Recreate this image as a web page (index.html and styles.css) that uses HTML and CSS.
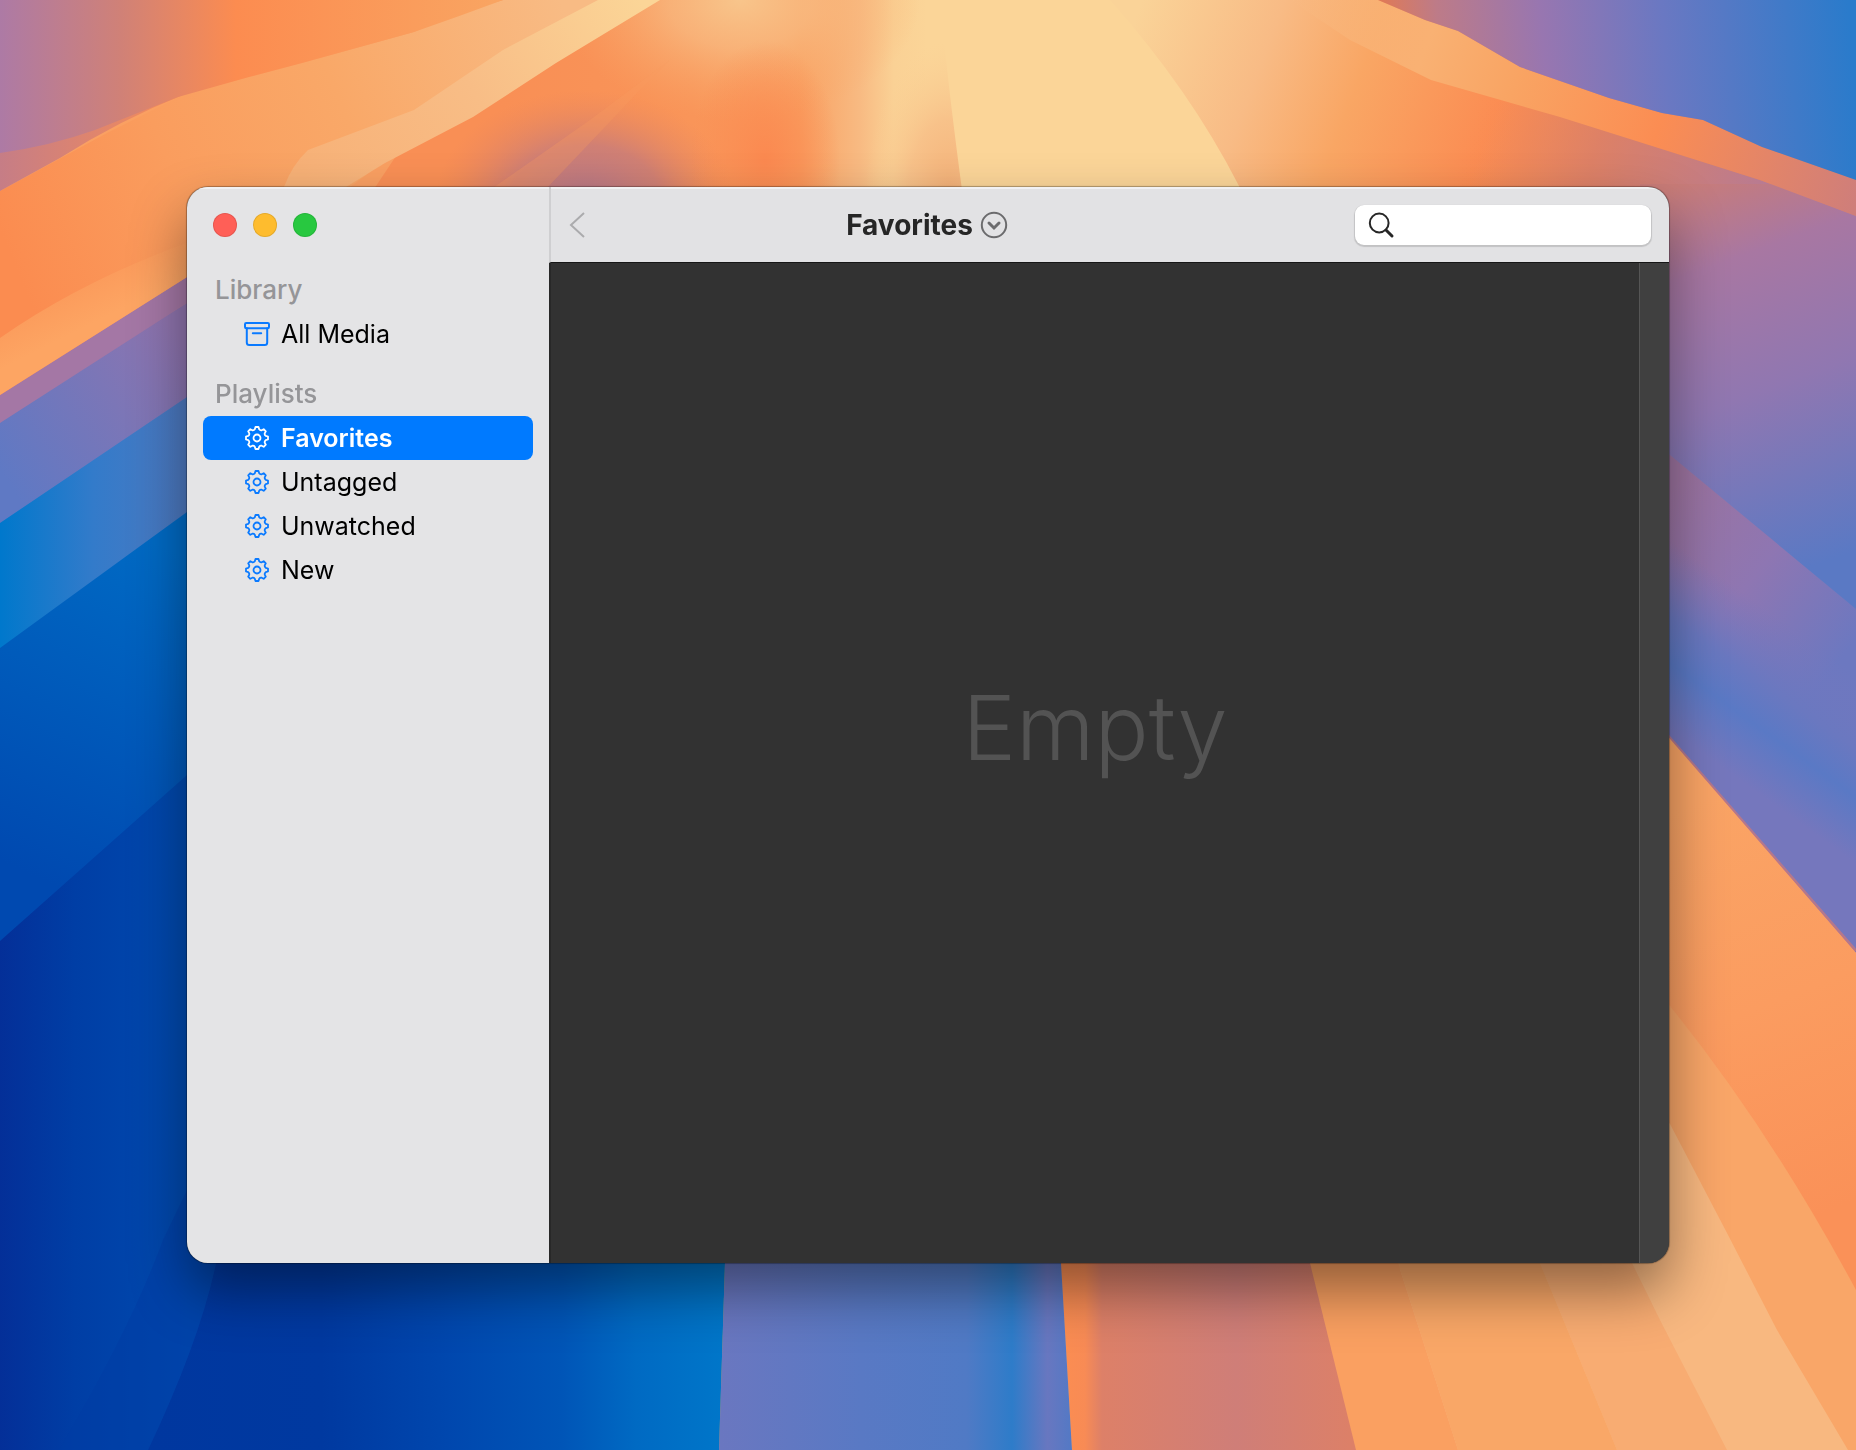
FILE: index.html
```html
<!DOCTYPE html>
<html lang="en">
<head>
<meta charset="utf-8">
<title>Favorites</title>
<link rel="stylesheet" href="styles.css">
</head>
<body>
<svg class="wallpaper" viewBox="0 0 1856 1450" preserveAspectRatio="none" aria-hidden="true">
  <defs>
    <linearGradient id="tl" gradientUnits="userSpaceOnUse" x1="0" y1="0" x2="503" y2="0"><stop offset="0" stop-color="#ad7aa5"/><stop offset=".24" stop-color="#d08177"/><stop offset=".47" stop-color="#fc8c50"/><stop offset="1" stop-color="#f9a562"/></linearGradient>
    <linearGradient id="tl2" gradientUnits="userSpaceOnUse" x1="0" y1="0" x2="190" y2="0"><stop offset="0" stop-color="#c67d86"/><stop offset="1" stop-color="#f98d54"/></linearGradient>
    <linearGradient id="warm" gradientUnits="userSpaceOnUse" x1="0" y1="230" x2="560" y2="0"><stop offset="0" stop-color="#fb8c50"/><stop offset=".3" stop-color="#fa9d5e"/><stop offset=".6" stop-color="#f9a868"/><stop offset="1" stop-color="#f8bb84"/></linearGradient>
    <linearGradient id="ray" gradientUnits="userSpaceOnUse" x1="310" y1="186" x2="640" y2="0"><stop offset="0" stop-color="#f7b177"/><stop offset=".5" stop-color="#f8bd86"/><stop offset="1" stop-color="#fbd597"/></linearGradient>
    <linearGradient id="centre" gradientUnits="userSpaceOnUse" x1="500" y1="0" x2="928" y2="0"><stop offset="0" stop-color="#f98f55"/><stop offset=".45" stop-color="#f99559"/><stop offset=".7" stop-color="#f9a061"/><stop offset=".84" stop-color="#f8ba82"/><stop offset=".92" stop-color="#fad195"/><stop offset="1" stop-color="#fbd598"/></linearGradient>
    <radialGradient id="topglow"><stop offset="0" stop-color="#f8c58b"/><stop offset=".4" stop-color="#f8bd84" stop-opacity=".7"/><stop offset="1" stop-color="#f9a868" stop-opacity="0"/></radialGradient>
    <radialGradient id="mauve"><stop offset="0" stop-color="#b57788"/><stop offset=".5" stop-color="#c67b7b" stop-opacity=".8"/><stop offset="1" stop-color="#e8845c" stop-opacity="0"/></radialGradient>
    <radialGradient id="hot"><stop offset="0" stop-color="#fb8950"/><stop offset="1" stop-color="#fb8950" stop-opacity="0"/></radialGradient>
    <radialGradient id="wedge" gradientUnits="userSpaceOnUse" cx="0" cy="0" r="1" gradientTransform="translate(950 200) scale(85 160)"><stop offset="0" stop-color="#f3ae75"/><stop offset=".5" stop-color="#f7bd86" stop-opacity=".8"/><stop offset="1" stop-color="#fad095" stop-opacity="0"/></radialGradient>
    <linearGradient id="right" gradientUnits="userSpaceOnUse" x1="1120" y1="60" x2="1600" y2="240"><stop offset="0" stop-color="#fad398"/><stop offset=".26" stop-color="#f8bb85"/><stop offset=".45" stop-color="#f9a664"/><stop offset=".72" stop-color="#fb8d53"/><stop offset="1" stop-color="#d58068"/></linearGradient>
    <linearGradient id="ridge" gradientUnits="userSpaceOnUse" x1="1290" y1="0" x2="1856" y2="200"><stop offset="0" stop-color="#f8bf87" stop-opacity="0"/><stop offset=".24" stop-color="#f9b173"/><stop offset=".4" stop-color="#f9a463"/><stop offset=".65" stop-color="#fb8d53"/><stop offset="1" stop-color="#cf7e7a"/></linearGradient>
    <linearGradient id="sky" gradientUnits="userSpaceOnUse" x1="1385" y1="60" x2="1850" y2="20"><stop offset="0" stop-color="#e07a56"/><stop offset=".12" stop-color="#bd7b88"/><stop offset=".34" stop-color="#9876b0"/><stop offset=".6" stop-color="#6a78c2"/><stop offset="1" stop-color="#2a7bcb"/></linearGradient>
    <linearGradient id="slope" gradientUnits="userSpaceOnUse" x1="1480" y1="100" x2="1780" y2="200"><stop offset="0" stop-color="#fb8d53" stop-opacity="0"/><stop offset=".4" stop-color="#dd8067" stop-opacity=".8"/><stop offset="1" stop-color="#b37a98"/></linearGradient>
    <linearGradient id="east" gradientUnits="userSpaceOnUse" x1="1690" y1="180" x2="1830" y2="560"><stop offset="0" stop-color="#c97c78"/><stop offset=".22" stop-color="#a877a2"/><stop offset=".55" stop-color="#9077b1"/><stop offset="1" stop-color="#5a79c4"/></linearGradient>
    <linearGradient id="band" gradientUnits="userSpaceOnUse" x1="1670" y1="490" x2="1856" y2="640"><stop offset="0" stop-color="#9c739f"/><stop offset=".5" stop-color="#8e76b2"/><stop offset="1" stop-color="#6c78c0"/></linearGradient>
    <linearGradient id="east2" gradientUnits="userSpaceOnUse" x1="1670" y1="540" x2="1580" y2="665"><stop offset="0" stop-color="#7577be" stop-opacity="0"/><stop offset=".4" stop-color="#6a78c0"/><stop offset=".65" stop-color="#5a79c5"/><stop offset="1" stop-color="#7577bd"/></linearGradient>
    <linearGradient id="se" gradientUnits="userSpaceOnUse" x1="1700" y1="800" x2="1856" y2="1200"><stop offset="0" stop-color="#faa465"/><stop offset=".5" stop-color="#fb9c60"/><stop offset="1" stop-color="#fa9158"/></linearGradient>
    <linearGradient id="streak" gradientUnits="userSpaceOnUse" x1="40" y1="300" x2="60" y2="340"><stop offset="0" stop-color="#fb9a5b"/><stop offset="1" stop-color="#fda563"/></linearGradient>
    <linearGradient id="violet" gradientUnits="userSpaceOnUse" x1="0" y1="470" x2="187" y2="350"><stop offset="0" stop-color="#5f79c4"/><stop offset="1" stop-color="#8f74ae"/></linearGradient>
    <linearGradient id="azure" gradientUnits="userSpaceOnUse" x1="0" y1="0" x2="187" y2="0"><stop offset="0" stop-color="#0078cc"/><stop offset=".5" stop-color="#337bca"/><stop offset="1" stop-color="#4e79c0"/></linearGradient>
    <linearGradient id="blue" gradientUnits="userSpaceOnUse" x1="0" y1="860" x2="150" y2="540"><stop offset="0" stop-color="#0049b0"/><stop offset="1" stop-color="#006ac4"/></linearGradient>
    <linearGradient id="navy" gradientUnits="userSpaceOnUse" x1="0" y1="0" x2="187" y2="0"><stop offset="0" stop-color="#042f98"/><stop offset=".4" stop-color="#003ea5"/><stop offset="1" stop-color="#004aaf"/></linearGradient>
    <linearGradient id="south" gradientUnits="userSpaceOnUse" x1="150" y1="0" x2="722" y2="0"><stop offset="0" stop-color="#00379f"/><stop offset=".3" stop-color="#0039a0"/><stop offset=".52" stop-color="#0047ae"/><stop offset=".72" stop-color="#0055b7"/><stop offset=".85" stop-color="#006ac3"/><stop offset="1" stop-color="#0076c9"/></linearGradient>
    <linearGradient id="southmid" gradientUnits="userSpaceOnUse" x1="720" y1="0" x2="1072" y2="0"><stop offset="0" stop-color="#6a77c0"/><stop offset=".4" stop-color="#5979c4"/><stop offset=".7" stop-color="#507ac5"/><stop offset=".83" stop-color="#2e7cc9"/><stop offset=".93" stop-color="#6877c0"/><stop offset="1" stop-color="#5379c5"/></linearGradient>
    <linearGradient id="coral" gradientUnits="userSpaceOnUse" x1="1065" y1="0" x2="1350" y2="0"><stop offset="0" stop-color="#fb8d52"/><stop offset=".07" stop-color="#f88b55"/><stop offset=".13" stop-color="#dd8068"/><stop offset=".6" stop-color="#cf7e78"/><stop offset="1" stop-color="#dc8068"/></linearGradient>
  </defs>
  <rect width="1856" height="1450" fill="#faa062"/>
  <path fill="url(#centre)" d="M500 0H930V300H300z"/>
  <path fill="#fbd598" d="M926 0H1400V200H926z"/>
  <ellipse cx="740" cy="0" rx="180" ry="120" fill="url(#topglow)"/>
  <ellipse cx="585" cy="200" rx="150" ry="110" fill="url(#mauve)"/>
  <ellipse cx="765" cy="160" rx="75" ry="120" fill="url(#hot)"/>
  <path fill="#f99c60" fill-opacity=".3" d="M670 60L590 120L490 190H545L640 90z"/>
  <path fill="url(#wedge)" d="M860 40H944Q950 100 962 190V200H860z"/>
  <path fill="url(#right)" d="M1110 0H1856V300H1290L1239 186Q1190 90 1110 0z"/>
  <path fill="url(#slope)" d="M1431 83L1560 117L1760 180L1856 216V300H1400z"/>
  <path fill="url(#east)" d="M1640 184H1773L1856 216V700H1640z"/>
  <path fill="url(#ridge)" d="M1290 0H1378L1425 20L1458 31L1520 67L1609 98L1662 113L1703 120L1762 147L1856 180V216L1760 180L1560 117L1431 80L1350 40z"/>
  <path fill="url(#sky)" d="M1378 0H1856V180L1762 147L1703 120L1662 113L1609 98L1520 67L1458 31L1425 20z"/>
  <path fill="url(#band)" d="M1600 420L1670 455L1856 609V960H1600z"/>
  <path fill="url(#east2)" d="M1600 480L1670 530L1856 664V960H1600z"/>
  <path fill="#faa364" d="M1600 660L1670 739L1856 953V1450H1069L1061 1200z"/>
  <path stroke="#d07878" stroke-width="3" opacity=".7" d="M1668 736L1856 951"/>
  <path fill="url(#se)" d="M1600 660L1670 739L1856 953V1300L1670 1006L1600 930z"/>
  <path fill="#f9a668" d="M1600 930L1670 1006Q1770 1130 1856 1290V1450H1600z"/>
  <path fill="#f8b880" d="M1600 1040L1670 1124L1727 1233L1777 1330L1848 1450H1400V1100z"/>
  <path fill="#f8ac72" d="M1540 1263L1617 1450H1727L1660 1320L1632 1263L1600 1200H1500z"/>
  <path fill="#f9a767" d="M1398 1263L1458 1450H1617L1540 1263L1520 1200H1380z"/>
  <path fill="#faa061" d="M1310 1263L1356 1450H1458L1398 1263L1380 1200H1290z"/>
  <path fill="url(#coral)" d="M1061 1200V1263L1072 1450H1356L1310 1263L1290 1200z"/>
  <path fill="url(#southmid)" d="M726 1200L725 1263L719 1450H1072L1061 1263V1200z"/>
  <path fill="url(#south)" d="M100 1200H726L725 1263L719 1450H40z"/>
  <path fill="url(#navy)" d="M0 930L190 770V1200H300L216 1263Q200 1340 148 1450H0z"/>
  <path fill="#003ba3" fill-opacity=".5" d="M187 1190L216 1263Q200 1340 148 1450H59Q130 1330 163 1240z"/>
  <path fill="url(#blue)" d="M0 640L240 470V740L187 775L0 941z"/>
  <path fill="url(#azure)" d="M0 520L240 360V480L187 512L0 648z"/>
  <path fill="url(#violet)" d="M0 418L240 270V362L187 397L0 523z"/>
  <path fill="#a477a5" d="M0 390L240 240V272L187 303L0 423z"/>
  <path fill="url(#warm)" d="M503 0Q460 12 414 32L302 63L249 77L183 95L107 133L0 191V395L187 277L240 244L300 190H346L600 0z"/>
  <path fill="url(#streak)" d="M0 338Q100 268 240 225V244L187 277L0 395z"/>
  <path fill="url(#ray)" d="M598 0H660L556 63L473 117L385 163L346 187H284Q292 165 308 150L414 110L503 50z"/>
  <path fill="url(#tl2)" d="M0 150L190 85L183 95Q120 120 60 158L0 191z"/>
  <path fill="url(#tl)" d="M0 0H503Q460 16 414 32L302 63L249 77L178 97L95 130Q50 146 0 153z"/>
</svg>
<svg class="symbols" aria-hidden="true">
  <symbol id="gear" viewBox="-12 -12 24 24">
    <path d="M-2.2-8.7L-1.5-11H1.5L2.2-8.7Q3.1-7.4 4.6-7.7L6.7-8.8L8.8-6.7L7.7-4.6Q7.4-3.1 8.7-2.2L11-1.5V1.5L8.7 2.2Q7.4 3.1 7.7 4.6L8.8 6.7L6.7 8.8L4.6 7.7Q3.1 7.4 2.2 8.7L1.5 11H-1.5L-2.2 8.7Q-3.1 7.4-4.6 7.7L-6.7 8.8L-8.8 6.7L-7.7 4.6Q-7.4 3.1-8.7 2.2L-11 1.5V-1.5L-8.7-2.2Q-7.4-3.1-7.7-4.6L-8.8-6.7L-6.7-8.8L-4.6-7.7Q-3.1-7.4-2.2-8.7z"/>
    <circle r="3.5"/>
  </symbol>
</svg>
<div class="desktop">
  <div class="window">
    <aside class="sidebar">
      <div class="lights">
        <button class="light close" aria-label="Close"></button>
        <button class="light minimize" aria-label="Minimize"></button>
        <button class="light expand" aria-label="Zoom"></button>
      </div>
      <nav class="sources">
        <section class="group">
          <h2 class="heading">Library</h2>
          <a class="item" href="#all">
            <svg class="icon" viewBox="0 0 26 26"><rect x="1" y="2" width="24" height="5.2" rx="1.3"/><path d="M2.8 7.2V21.5Q2.8 24 5.3 24H20.7Q23.2 24 23.2 21.5V7.2M8.8 12.3H17.2"/></svg>
            All Media</a>
        </section>
        <section class="group">
          <h2 class="heading">Playlists</h2>
          <a class="item selected" href="#favorites" aria-current="page"><svg class="icon gear"><use href="#gear"/></svg>Favorites</a>
          <a class="item" href="#untagged"><svg class="icon gear"><use href="#gear"/></svg>Untagged</a>
          <a class="item" href="#unwatched"><svg class="icon gear"><use href="#gear"/></svg>Unwatched</a>
          <a class="item" href="#new"><svg class="icon gear"><use href="#gear"/></svg>New</a>
        </section>
      </nav>
    </aside>
    <main class="main">
      <header class="toolbar">
        <button class="back" aria-label="Back"><svg width="16" height="28" viewBox="0 0 16 28"><path d="M15 2L2 14L15 26"/></svg></button>
        <div class="title-area">
          <button class="title">Favorites
            <svg width="28" height="28" viewBox="0 0 28 28"><circle cx="14" cy="14" r="12.2"/><path class="chevron" d="M9 12L14 17L19 12"/></svg>
          </button>
        </div>
        <label class="search">
          <svg width="28" height="28" viewBox="0 0 28 28"><circle cx="12.2" cy="12" r="9.4"/><path class="handle" d="M19 19L25 25"/></svg>
          <input type="search" aria-label="Search">
        </label>
      </header>
      <div class="body">
        <p class="empty">Empty</p>
        <div class="strip"></div>
      </div>
    </main>
  </div>
</div>
</body>
</html>
```
FILE: styles.css
```css
* { box-sizing: border-box; }

body {
  margin: 0;
  font-family: Inter, "Liberation Sans", sans-serif;
  color: #000;
}

button {
  padding: 0;
  border: 0;
  background: none;
  font: inherit;
  color: inherit;
}

svg { display: block; flex: none; }

.wallpaper {
  position: fixed;
  inset: 0;
  width: 100%;
  height: 100%;
  z-index: -1;
}

.symbols { position: absolute; width: 0; height: 0; }

.desktop {
  display: flex;
  min-height: 100vh;
  padding: 187px;
}

.window {
  display: flex;
  flex: 1;
  min-width: 0;
  border-radius: 21px;
  overflow: hidden;
  background: #323232;
  box-shadow: 0 0 1px 1px rgba(0, 0, 0, .3), 0 28px 56px rgba(0, 0, 0, .42);
}

.sidebar {
  flex: none;
  width: 362px;
  background: #e4e4e6;
  box-shadow: inset 0 2px #f1f1f3;
}

.lights {
  display: flex;
  align-items: center;
  gap: 16px;
  height: 76px;
  padding-left: 26px;
}

.light {
  width: 24px;
  height: 24px;
  border-radius: 50%;
  box-shadow: inset 0 0 0 1px rgba(0, 0, 0, .1);
}

.close { background: #ff5f57; }
.minimize { background: #febc2e; }
.expand { background: #28c840; }

.sources {
  display: flex;
  flex-direction: column;
  gap: 16px;
  padding: 5px 16px;
}

.heading {
  margin: 0;
  padding-left: 12px;
  font-size: 26px;
  font-weight: 500;
  line-height: 44px;
  color: #959598;
}

.item {
  display: flex;
  align-items: center;
  gap: 11px;
  height: 44px;
  padding-left: 41px;
  border-radius: 8px;
  font-size: 25px;
  color: #000;
  text-decoration: none;
}

.icon {
  width: 26px;
  height: 26px;
  fill: none;
  stroke: #0a7aff;
  stroke-width: 2;
  stroke-linecap: round;
  stroke-linejoin: round;
}

.gear { padding: 1px; stroke-width: 1.8; }

.selected {
  background: #007aff;
  font-weight: 600;
  color: #fff;
}

.selected .icon { stroke: #fff; }

.main {
  display: flex;
  flex: 1;
  flex-direction: column;
  min-width: 0;
}

.toolbar {
  display: flex;
  align-items: center;
  height: 76px;
  padding: 0 18px;
  border-left: 2px solid #cfcfd1;
  border-bottom: 1px solid #161616;
  background: #e2e2e4;
  box-shadow: inset 0 2px #f1f1f3;
}

.back svg { fill: none; stroke: #ababad; stroke-width: 2; }

.title-area {
  display: flex;
  flex: 1;
  justify-content: center;
  padding-right: 86px;
}

.title {
  display: flex;
  align-items: center;
  gap: 7px;
  font-size: 28px;
  font-weight: 700;
  color: #262626;
}

.title svg { fill: none; stroke: #6b6b6d; stroke-width: 2; }
.title .chevron { stroke-width: 3; stroke-linecap: round; }

.search {
  display: flex;
  align-items: center;
  gap: 8px;
  width: 296px;
  height: 40px;
  padding: 0 12px;
  border-radius: 9px;
  background: #fff;
  box-shadow: 0 1px 1px 1px rgba(0, 0, 0, .14);
}

.search svg { fill: none; stroke: #262626; stroke-width: 2; }
.search .handle { stroke-width: 3; stroke-linecap: round; }

.search input {
  flex: 1;
  min-width: 0;
  padding: 0;
  border: 0;
  outline: 0;
  background: none;
  font: inherit;
  font-size: 25px;
}

.body {
  display: flex;
  flex: 1;
  border-left: 2px solid #282828;
}

.empty {
  flex: 1;
  align-self: center;
  margin: 0;
  padding-bottom: 70px;
  font-size: 90px;
  font-weight: 300;
  line-height: 112px;
  text-align: center;
  color: #535353;
}

.strip {
  width: 30px;
  border-left: 1px solid #555;
  background: #404040;
}
```
